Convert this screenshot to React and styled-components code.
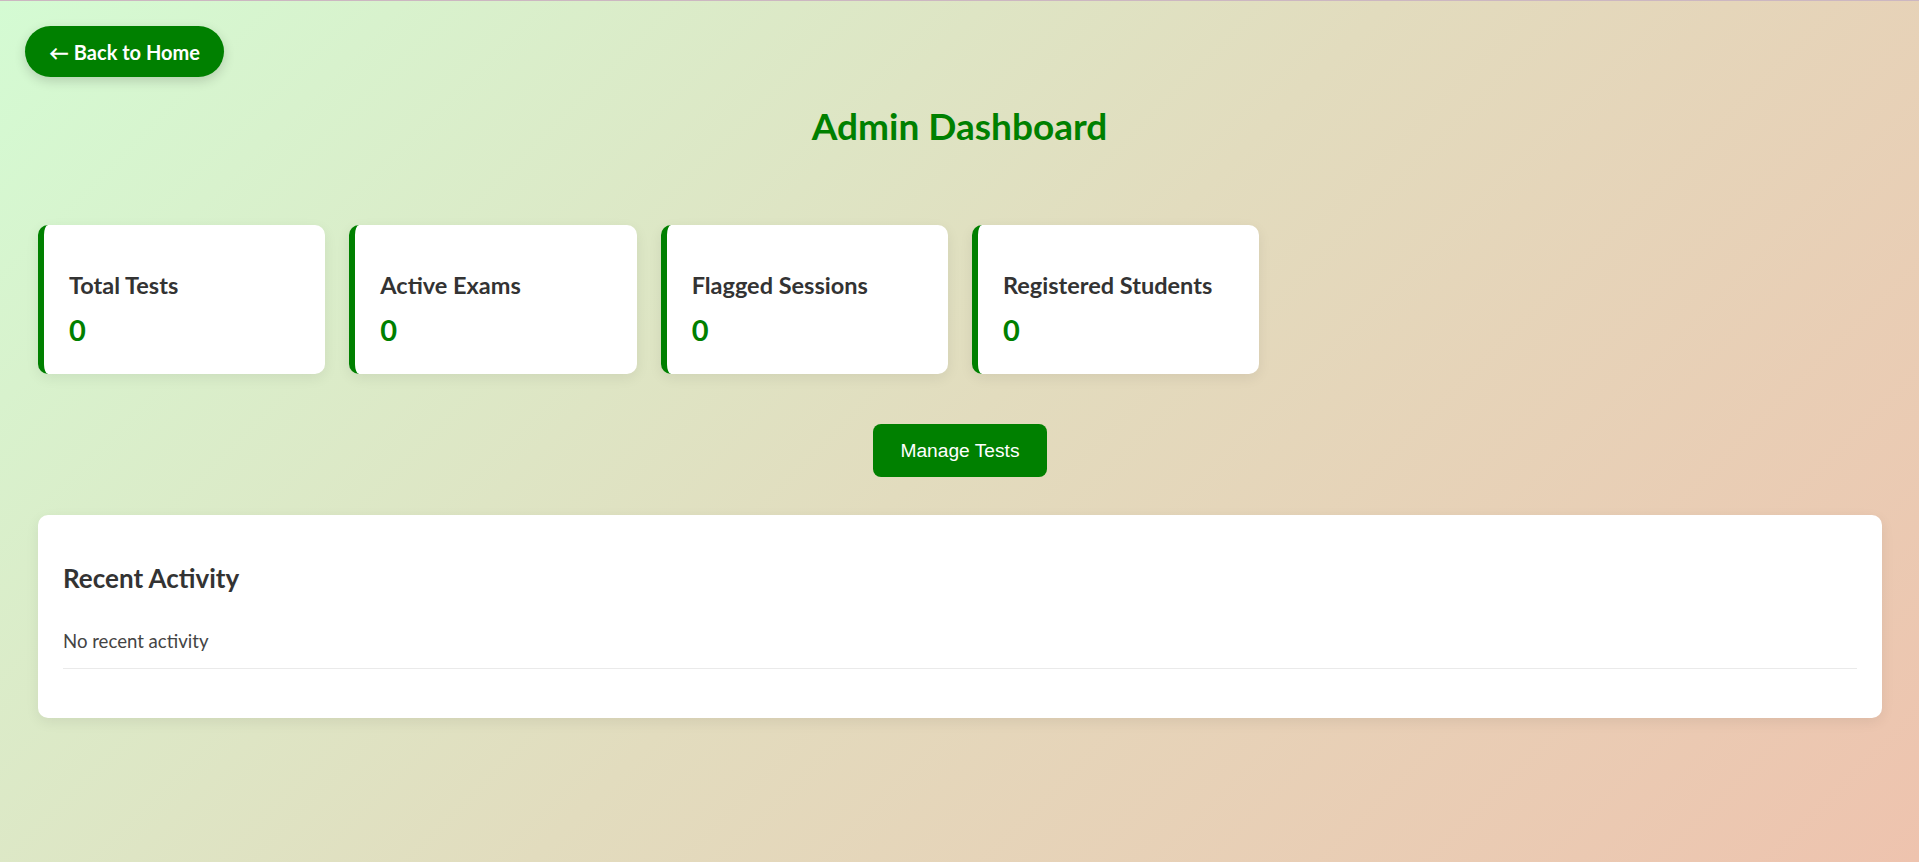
import React from 'react';
import styled, { createGlobalStyle } from 'styled-components';

const GlobalStyle = createGlobalStyle`
    html, body {
        margin: 0;
        padding: 0;
    }
    body {
        min-height: 100vh;
        box-sizing: border-box;
        border-top: 1px solid #ccb7c1;
        font-family: Lato, "Open Sans", sans-serif;
        background: linear-gradient(135deg, #d4fbd3 0%, #e2dcbe 50%, #eec3ae 100%);
        background-attachment: fixed;
        color: #333;
    }
`

const Page = styled.div`
    padding: 25px 25px 40px;
`

const BackButton = styled.button`
    display: inline-flex;
    align-items: center;
    height: 51px;
    padding: 0 24px;
    border: none;
    border-radius: 26px;
    background: #008000;
    color: #fff;
    font-family: Lato, sans-serif;
    font-size: 20px;
    font-weight: 700;
    box-shadow: 0 4px 12px rgba(0, 0, 0, 0.16);
    cursor: pointer;
`

const Title = styled.h1`
    margin: 27px 0 0;
    text-align: center;
    font-size: 37px;
    line-height: 1.2;
    font-weight: 700;
    color: #008000;
`

const Dashboard = styled.div`
    padding: 0 12px 0 13px;
`

const StatsGrid = styled.div`
    display: grid;
    grid-template-columns: repeat(6, 1fr);
    gap: 24px;
    margin-top: 77px;
`

const StatCard = styled.div`
    height: 149px;
    box-sizing: border-box;
    padding: 46px 20px 0 25px;
    background: #fff;
    border-left: 6px solid #008000;
    border-radius: 10px;
    box-shadow: 0 4px 14px rgba(0, 0, 0, 0.07);
`

const StatLabel = styled.h3`
    margin: 0;
    font-size: 23.5px;
    line-height: 1.2;
    font-weight: 700;
    color: #333;
`

const StatValue = styled.p`
    margin: 13px 0 0;
    font-size: 29px;
    line-height: 1.2;
    font-weight: 700;
    color: #008000;
`

const Actions = styled.div`
    display: flex;
    justify-content: center;
    margin-top: 50px;
`

const ActionButton = styled.button`
    height: 53px;
    padding: 0 27px;
    border: none;
    border-radius: 8px;
    background: #008000;
    color: #fff;
    font-family: "Liberation Sans", Arial, sans-serif;
    font-size: 19.2px;
    cursor: pointer;
`

const ActivityCard = styled.section`
    margin-top: 38px;
    padding: 48px 25px 49px 25px;
    background: #fff;
    border-radius: 10px;
    box-shadow: 0 4px 14px rgba(0, 0, 0, 0.07);
`

const ActivityTitle = styled.h2`
    margin: 0;
    font-size: 26px;
    line-height: 1.2;
    font-weight: 700;
    color: #333;
`

const ActivityList = styled.ul`
    list-style: none;
    margin: 35px 0 0;
    padding: 0;
`

const ActivityItem = styled.li`
    padding-bottom: 16px;
    border-bottom: 1px solid #eaeaea;
    font-size: 18.6px;
    line-height: 1.2;
    color: #444;
`

const stats = [
    { label: 'Total Tests', value: 0 },
    { label: 'Active Exams', value: 0 },
    { label: 'Flagged Sessions', value: 0 },
    { label: 'Registered Students', value: 0 },
]

function App() {
    const activity = []
    return (
        <>
            <GlobalStyle />
            <Page>
                <BackButton>← Back to Home</BackButton>
                <Title>Admin Dashboard</Title>
                <Dashboard>
                    <StatsGrid>
                        {stats.map(s => (
                            <StatCard key={s.label}>
                                <StatLabel>{s.label}</StatLabel>
                                <StatValue>{s.value}</StatValue>
                            </StatCard>
                        ))}
                    </StatsGrid>
                    <Actions>
                        <ActionButton>Manage Tests</ActionButton>
                    </Actions>
                    <ActivityCard>
                        <ActivityTitle>Recent Activity</ActivityTitle>
                        <ActivityList>
                            {activity.length === 0 ? (
                                <ActivityItem>No recent activity</ActivityItem>
                            ) : activity.map(a => <ActivityItem key={a.id}>{a.text}</ActivityItem>)}
                        </ActivityList>
                    </ActivityCard>
                </Dashboard>
            </Page>
        </>
    );
}

export default App;
